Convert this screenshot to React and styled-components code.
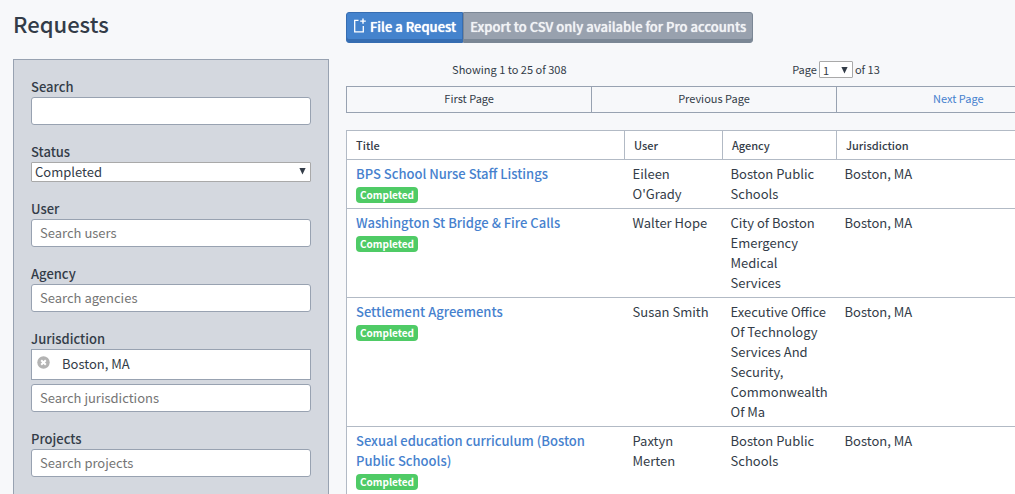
import React, { useState } from "react";
import styled, { createGlobalStyle } from "styled-components";

const GlobalStyle = createGlobalStyle`
  * {
    box-sizing: border-box;
  }

  body {
    margin: 0;
    background: #f7f8fa;
    color: #333c48;
    font-family: "Source Sans Pro", "Noto Sans CJK JP", "Noto Sans", sans-serif;
    font-size: 13px;
    line-height: 20px;
  }

  button, input, select {
    font: inherit;
    color: inherit;
  }
`;

const Page = styled.div`
  display: grid;
  grid-template-columns: 316px minmax(735px, 1fr);
  gap: 17px;
  height: 100vh;
  padding-left: 13px;
  overflow: hidden;
`;

const Side = styled.div`
  display: flex;
  flex-direction: column;
`;

const Heading = styled.h1`
  margin: 0;
  padding: 8px 0 21px;
  font-size: 22px;
  font-weight: 500;
  line-height: 30px;
`;

const Filters = styled.form`
  flex: 1;
  display: flex;
  flex-direction: column;
  gap: 17px;
  padding: 17px;
  border: 1px solid #98a2b1;
  background: #d4d8df;
`;

const Field = styled.div`
  display: flex;
  flex-direction: column;
`;

const Label = styled.label`
  font-weight: 500;
`;

const TextInput = styled.input`
  width: 100%;
  height: 28px;
  padding: 0 8px 2px;
  border: 1px solid #98a2b1;
  border-radius: 3px;
  background: #fff;

  &::placeholder {
    color: #757575;
    opacity: 1;
  }
`;

const SelectWrap = styled.div`
  position: relative;
  display: ${props => (props.$inline ? "inline-block" : "block")};
`;

const Select = styled.select`
  appearance: none;
  display: block;
  width: ${props => (props.$small ? "34px" : "100%")};
  height: ${props => (props.$small ? "17px" : "20px")};
  padding: 0 3px;
  border: 1px solid #a9a9a9;
  border-radius: 1px;
  background: #fff;
  line-height: 16px;
`;

const Arrow = styled.svg`
  position: absolute;
  top: 6px;
  right: 5px;
  width: 7px;
  height: 7px;
  fill: #333c48;
  pointer-events: none;
`;

const Chosen = styled.div`
  display: flex;
  align-items: center;
  gap: 12px;
  height: 31px;
  margin-bottom: 4px;
  padding: 0 5px 1px;
  border: 1px solid #98a2b1;
  background: #fff;
`;

const RemoveBtn = styled.button`
  display: flex;
  padding: 0 0 3px;
  border: 0;
  background: none;
  cursor: pointer;
`;

const Main = styled.main`
  padding-top: 12px;
`;

const Actions = styled.div`
  display: flex;
`;

const ActionBtn = styled.button`
  display: flex;
  align-items: center;
  gap: 4px;
  height: 31px;
  padding: 0 6px 2px;
  border: 1px solid #366db1;
  border-radius: 3px 0 0 3px;
  background: #4483cd;
  box-shadow: inset 0 -3px #366db1;
  color: #fff;
  font-weight: 500;
  text-shadow: 0 0 1px currentColor;
  white-space: nowrap;
  cursor: pointer;
`;

const ExportBtn = styled(ActionBtn)`
  border-color: #7b8795;
  border-radius: 0 3px 3px 0;
  background: #98a1ae;
  box-shadow: inset 0 -3px #7b8795;
  color: #f1f3f5;
`;

const Toolbar = styled.div`
  display: grid;
  grid-template-columns: 4fr 4fr 1fr;
  margin: 16px 0 7px;
  font-size: 11px;
  text-align: center;
`;

const Pager = styled.label`
  display: flex;
  align-items: center;
  justify-content: center;
  gap: 2px;
`;

const Pagination = styled.nav`
  display: grid;
  grid-template-columns: repeat(3, 1fr);
  border: 1px solid #98a2b1;
  font-size: 11px;
  text-align: center;
`;

const PageStep = styled.span`
  height: 25px;
  line-height: 23px;

  & + & {
    border-left: 1px solid #98a2b1;
  }
`;

const Link = styled.a`
  color: #4681ce;
  text-decoration: none;
`;

const Table = styled.table`
  width: 100%;
  margin-top: 17px;
  border-collapse: collapse;
  table-layout: fixed;
  border: 1px solid #b2bac5;
  background: #fff;
`;

const HeadCell = styled.th`
  width: ${props => props.$width || "auto"};
  height: 29px;
  padding: 0 9px;
  border: 1px solid #b2bac5;
  font-size: 11px;
  font-weight: 500;
  text-align: left;
`;

const Row = styled.tr`
  border-bottom: 1px solid #b2bac5;
`;

const Cell = styled.td`
  padding: 4px 8px;
  vertical-align: top;

  &:first-child {
    padding-left: 9px;
  }
`;

const TitleLink = styled(Link)`
  display: block;
  font-weight: 500;
`;

const Badge = styled.span`
  display: block;
  width: fit-content;
  margin-top: 3px;
  padding: 0 4px 1px;
  border-radius: 4px;
  background: #4fcb66;
  color: #fff;
  font-size: 10px;
  font-weight: 700;
  line-height: 15px;
`;

const requests = [
  { title: "BPS School Nurse Staff Listings", user: "Eileen O'Grady", agency: "Boston Public Schools" },
  { title: "Washington St Bridge & Fire Calls", user: "Walter Hope", agency: "City of Boston Emergency Medical Services" },
  { title: "Settlement Agreements", user: "Susan Smith", agency: "Executive Office Of Technology Services And Security, Commonwealth Of Ma" },
  { title: "Sexual education curriculum (Boston Public Schools)", user: "Paxtyn Merten", agency: "Boston Public Schools" },
];

function DownArrow() {
  return (
    <Arrow viewBox="0 0 7 7" aria-hidden="true">
      <path d="M0.4 0h6.2L3.5 6.6z" />
    </Arrow>
  );
}

function NewIcon() {
  return (
    <svg width="13" height="20" viewBox="0 0 13 20" fill="none" stroke="#fff" strokeWidth="1.3" aria-hidden="true">
      <path d="M5.5 3.3H1.7v11.6h8.6V9" />
      <path d="M10 1.4v5.4M7.2 4.1h5.6" stroke="#fff" strokeWidth="1.4" />
    </svg>
  );
}

function RemoveIcon() {
  return (
    <svg width="13" height="13" viewBox="0 0 13 13" aria-hidden="true">
      <circle cx="6.5" cy="6.5" r="6.2" fill="#b3b3b3" />
      <path d="M4.2 4.2l4.6 4.6M8.8 4.2L4.2 8.8" stroke="#fff" strokeWidth="2" />
    </svg>
  );
}

function SearchField({ id, label, placeholder, children }) {
  return (
    <Field>
      <Label htmlFor={id}>{label}</Label>
      {children}
      <TextInput id={id} type="text" placeholder={placeholder} />
    </Field>
  );
}

function App() {
  const [status, setStatus] = useState("Completed");
  const [page, setPage] = useState("1");
  const [place, setPlace] = useState("Boston, MA");

  return (
    <>
      <GlobalStyle />
      <Page>
        <Side>
          <Heading>Requests</Heading>
          <Filters>
            <SearchField id="search" label="Search" />
            <Field>
              <Label htmlFor="status">Status</Label>
              <SelectWrap>
                <Select id="status" value={status} onChange={e => setStatus(e.target.value)}>
                  <option>Completed</option>
                  <option>Processing</option>
                </Select>
                <DownArrow />
              </SelectWrap>
            </Field>
            <SearchField id="user" label="User" placeholder="Search users" />
            <SearchField id="agency" label="Agency" placeholder="Search agencies" />
            <SearchField id="jurisdiction" label="Jurisdiction" placeholder="Search jurisdictions">
              {place && (
                <Chosen>
                  <RemoveBtn type="button" aria-label="Remove" onClick={() => setPlace("")}>
                    <RemoveIcon />
                  </RemoveBtn>
                  {place}
                </Chosen>
              )}
            </SearchField>
            <SearchField id="projects" label="Projects" placeholder="Search projects" />
          </Filters>
        </Side>
        <Main>
          <Actions>
            <ActionBtn type="button">
              <NewIcon />
              File a Request
            </ActionBtn>
            <ExportBtn type="button">Export to CSV only available for Pro accounts</ExportBtn>
          </Actions>
          <Toolbar>
            <span>Showing 1 to 25 of 308</span>
            <Pager>
              Page
              <SelectWrap $inline>
                <Select $small value={page} onChange={e => setPage(e.target.value)}>
                  {Array.from({ length: 13 }, (_, i) => (
                    <option key={i}>{i + 1}</option>
                  ))}
                </Select>
                <DownArrow />
              </SelectWrap>
              of 13
            </Pager>
          </Toolbar>
          <Pagination>
            <PageStep>First Page</PageStep>
            <PageStep>Previous Page</PageStep>
            <PageStep>
              <Link href="#next">Next Page</Link>
            </PageStep>
          </Pagination>
          <Table>
            <thead>
              <tr>
                <HeadCell $width="278px">Title</HeadCell>
                <HeadCell $width="98px">User</HeadCell>
                <HeadCell $width="114px">Agency</HeadCell>
                <HeadCell>Jurisdiction</HeadCell>
              </tr>
            </thead>
            <tbody>
              {requests.map(request => (
                <Row key={request.title}>
                  <Cell>
                    <TitleLink href="#request">{request.title}</TitleLink>
                    <Badge>Completed</Badge>
                  </Cell>
                  <Cell>{request.user}</Cell>
                  <Cell>{request.agency}</Cell>
                  <Cell>Boston, MA</Cell>
                </Row>
              ))}
            </tbody>
          </Table>
        </Main>
      </Page>
    </>
  );
}

export default App;
